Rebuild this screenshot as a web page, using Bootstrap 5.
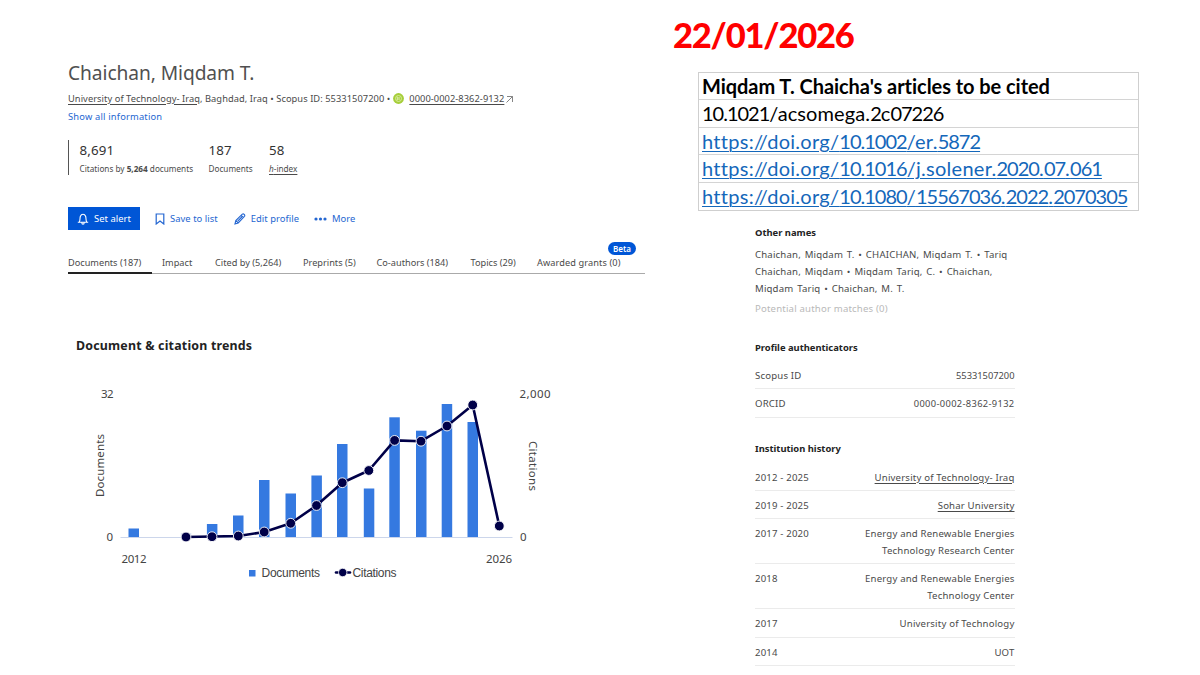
<!DOCTYPE html>
<html lang="en">
<head>
<meta charset="utf-8">
<meta name="viewport" content="width=device-width, initial-scale=1">
<title>Chaichan, Miqdam T.</title>
<link href="https://cdn.jsdelivr.net/npm/bootstrap@5.3.0/dist/css/bootstrap.min.css" rel="stylesheet">
<style>
  body { background:#fff; color:#4a4a4a; font-family:"Noto Sans","Open Sans",sans-serif; font-size:9.3px; line-height:17px; height:675px; overflow:hidden; }
  a { color:inherit; text-underline-offset:2px; }
  .t { white-space:nowrap; }
  .profile { width:577px; margin-left:68px; padding-top:60px; }
  .side { margin-left:27px; width:480px; padding-top:15px; }
  .author { font-size:19.2px; line-height:24px; font-weight:400; color:#505050; margin:0 0 5px; letter-spacing:-.08px; padding-top:.5px; }
  .meta { letter-spacing:.055px; }
  .show-all { color:#2466d1; margin-top:1px; letter-spacing:.2px; }
  .stats { border-left:1.5px solid #555; height:35px; margin-top:15.5px; padding-left:10.5px; }
  .stats .num { font-size:13.3px; line-height:20px; color:#333; letter-spacing:.15px; }
  .stats .lbl { font-size:8.2px; line-height:17px; }
  .st1 { width:129px; } .st2 { width:60.5px; }
  .actions { margin-top:32px; height:23px; color:#2466d1; font-size:9.4px; letter-spacing:.05px; }
  .alert-btn { width:72px; height:23px; background:#0056d6; color:#fff; border-radius:0; padding:0 0 0 9px; font-size:9.4px; line-height:17px; text-align:left; letter-spacing:.05px; }
  .alert-btn:hover { background:#0056d6; color:#fff; }
  .tabs { margin-top:22.5px; height:21px; border-bottom:1px solid #aaa; line-height:20px; font-size:9.2px; flex-wrap:nowrap; }
  .tabs .nav-link { padding:0; color:#4a4a4a; height:21px; white-space:nowrap; }
  .tabs .active { width:84px; border-bottom:2px solid #222; }
  .beta { right:9px; top:-11px; width:28px; height:13px; line-height:13px; padding:0; font-size:8px; font-weight:600; background:#0056d6; }
  .trend { font-size:12.4px; letter-spacing:.2px; line-height:20px; color:#222; font-weight:700; margin:62px 0 0 8px; }
  .chart { display:block; margin-top:14.5px; }
  .chart text { fill:#444; font-size:11.5px; }
  .chart .lg { font-family:"Liberation Sans",sans-serif; font-size:12px; }
  .date { font-family:Lato,sans-serif; font-weight:900; font-size:34.5px; line-height:40px; color:#f00; letter-spacing:-1.2px; padding-left:1px; }
  .dois { margin:17px 0 0 26px; width:441px; border:1px solid #cfcfcf; font-family:Lato,sans-serif; font-size:20px; color:#000; letter-spacing:.1px; }
  .dois > div { height:27.4px; line-height:27px; border-bottom:1px solid #d4d4d4; padding-left:3px; white-space:nowrap; }
  .dois > div:last-child { border-bottom:0; }
  .dois .fw-bold { letter-spacing:-.05px; }
  .dois .dg { letter-spacing:-1px; }
  .dois a { color:#1467ba; text-decoration-thickness:1px; letter-spacing:.28px; }
  .info { width:259.5px; margin-left:83px; margin-top:13px; line-height:16.8px; font-size:9.6px; letter-spacing:.18px; }
  .info h2 { font-size:9.4px; line-height:17px; font-weight:700; color:#222; margin:0; letter-spacing:0; }
  .info .names { margin-top:6.5px; word-spacing:1.1px; }
  .info .fact { padding:7px 0 3.5px; border-bottom:1px solid #ebebeb; }
  .info .idno { font-size:9.3px; letter-spacing:0; }
</style>
</head>
<body class="d-flex">
<main class="profile flex-shrink-0">
  <h1 class="author t">Chaichan, Miqdam T.</h1>
  <div class="d-flex align-items-center t">
    <span class="meta"><a href="#">University of Technology- Iraq</a>, Baghdad, Iraq • Scopus ID: 55331507200 •</span>
    <svg style="margin-left:3px;margin-right:5px" width="11" height="11" viewBox="0 0 11 11"><circle cx="5.5" cy="5.5" r="5.4" fill="#a6ce39"/><circle cx="5.5" cy="5.5" r="3" fill="none" stroke="#d5ea98"/><path d="M4.3 3.8v3.4M6 4v3" stroke="#eef8cf" stroke-width=".8"/></svg>
    <a href="#" style="letter-spacing:.05px">0000-0002-8362-9132</a>
    <svg style="margin-left:1px" width="9" height="9" viewBox="0 0 9 9" fill="none" stroke="#777" stroke-width=".9"><path d="M2 2.500h5.500V8M7.500 2.500L1.500 8.500"/></svg>
  </div>
  <div class="show-all t">Show all information</div>
  <div class="stats d-flex t">
    <div class="st1"><div class="num">8,691</div><div class="lbl">Citations by <b>5,264</b> documents</div></div>
    <div class="st2"><div class="num">187</div><div class="lbl">Documents</div></div>
    <div><div class="num">58</div><div class="lbl"><a href="#"><i>h</i>-index</a></div></div>
  </div>
  <div class="actions d-flex align-items-center t">
    <button class="btn alert-btn d-flex align-items-center border-0"><svg style="margin-right:5px" width="12" height="12" viewBox="0 0 12 12" fill="none" stroke="#fff" stroke-width="1.1"><path d="M.8 9.300h10.400M2.200 9.200C3.400 7.500 2.700 5 3.400 3.200Q4.200 1.200 6 1.200T8.600 3.200C9.300 5 8.600 7.500 9.800 9.200M4.800 9.500q0 1.700 1.200 1.700t1.200-1.700"/></svg>Set alert</button>
    <svg style="margin-left:15px;margin-right:5px" width="10" height="12" viewBox="0 0 10 12" fill="none" stroke="#2466d1" stroke-width="1.2"><path d="M1.200 1h7.600v10L5 8 1.200 11z"/></svg><span>Save to list</span>
    <svg style="margin-left:16px;margin-right:5px" width="12" height="12" viewBox="0 0 12 12" fill="none" stroke="#2466d1" stroke-width="1.1"><path d="M1 11l.8-3.400L8.300 1.100q1-.6 1.900.3t.4 1.900L4.200 10 1 11zM7.200 2.300l2.400 2.400M1.800 7.600l2.500 2.300M3.700 8.100l4.600-4.600"/></svg><span>Edit profile</span>
    <svg style="margin-left:15px;margin-right:5px" width="13" height="4" viewBox="0 0 13 4" fill="#2466d1"><circle cx="2" cy="2" r="1.600"/><circle cx="6.500" cy="2" r="1.600"/><circle cx="11" cy="2" r="1.600"/></svg><span>More</span>
  </div>
  <nav class="nav tabs position-relative">
    <a class="nav-link active" href="#">Documents (187)</a>
    <a class="nav-link" style="margin-left:10px;width:53px" href="#">Impact</a>
    <a class="nav-link" style="width:88px" href="#">Cited by (5,264)</a>
    <a class="nav-link" style="width:73.5px" href="#">Preprints (5)</a>
    <a class="nav-link" style="width:94px" href="#">Co-authors (184)</a>
    <a class="nav-link" style="width:66.5px" href="#">Topics (29)</a>
    <a class="nav-link" style="letter-spacing:.1px" href="#">Awarded grants (0)</a>
    <span class="badge rounded-pill beta position-absolute">Beta</span>
  </nav>
  <h2 class="trend t">Document &amp; citation trends</h2>
  <svg class="chart" width="577" height="220" viewBox="68 370 577 220">
    <path d="M120.500 537.500H512.500" stroke="#ccd6eb"/>
    <g fill="#3579e0">
      <rect x="128.500" y="528.500" width="10.500" height="8.500"/>
      <rect x="180.800" y="533" width="10.500" height="4" fill="#dbe6f8"/>
      <rect x="206.900" y="524" width="10.500" height="13"/>
      <rect x="233" y="515.500" width="10.500" height="21.500"/>
      <rect x="259" y="480" width="10.500" height="57"/>
      <rect x="285.500" y="493.500" width="10.500" height="43.500"/>
      <rect x="311.400" y="475.500" width="10.500" height="61.500"/>
      <rect x="337" y="444" width="10.500" height="93"/>
      <rect x="363.800" y="488.500" width="10.500" height="48.500"/>
      <rect x="389.300" y="417.300" width="10.500" height="119.700"/>
      <rect x="416" y="430.700" width="10.500" height="106.300"/>
      <rect x="441.700" y="404" width="10.500" height="133"/>
      <rect x="467.500" y="422" width="10.500" height="115"/>
    </g>
    <path d="M186 537L212 536.500 238.300 536 264.200 532 290.700 523.300 316.500 505.500 342.300 482.700 368.800 470.500 394.600 440.400 421 441.200 447 426 472.700 405 499.300 526" fill="none" stroke="#000048" stroke-width="2.600" stroke-linejoin="round"/>
    <g fill="#000048" stroke="#fff" stroke-width=".9">
      <circle cx="186" cy="537" r="4.900"/><circle cx="212" cy="536.700" r="4.900"/><circle cx="238.300" cy="536" r="4.900"/><circle cx="264.200" cy="532" r="4.900"/><circle cx="290.700" cy="523.300" r="4.900"/><circle cx="316.500" cy="505.500" r="4.900"/><circle cx="342.300" cy="482.700" r="4.900"/><circle cx="368.800" cy="470.500" r="4.900"/><circle cx="394.600" cy="440.400" r="4.900"/><circle cx="421" cy="441.200" r="4.900"/><circle cx="447" cy="426" r="4.900"/><circle cx="472.700" cy="405" r="4.900"/><circle cx="499.300" cy="526" r="4.900"/>
    </g>
    <text x="101" y="397.500" textLength="12.500">32</text>
    <text x="106.500" y="540.500" textLength="6.500">0</text>
    <text x="519.500" y="397.500" textLength="31">2,000</text>
    <text x="520" y="540.500" textLength="6.500">0</text>
    <text x="121.500" y="563" textLength="25">2012</text>
    <text x="486" y="563" textLength="26">2026</text>
    <text transform="translate(104 497) rotate(-90)" textLength="63">Documents</text>
    <text transform="translate(528.500 441) rotate(90)" textLength="50">Citations</text>
    <rect x="249" y="570" width="6.500" height="6.500" fill="#3579e0"/>
    <text class="lg" x="261.500" y="577" textLength="58.500">Documents</text>
    <path d="M336 572.500H350" stroke="#000048" stroke-width="2.600" stroke-linecap="round"/>
    <circle cx="342.700" cy="572.500" r="4.200" fill="#000048" stroke="#fff" stroke-width=".8"/>
    <text class="lg" x="352.500" y="577" textLength="44">Citations</text>
  </svg>
</main>
<aside class="side flex-shrink-0">
  <div class="date t">22/01/2026</div>
  <div class="dois">
    <div class="fw-bold">Miqdam T. Chaicha's articles to be cited</div>
    <div><span class="dg">10.1021</span>/acsomega.<span class="dg">2</span>c<span class="dg">07226</span></div>
    <div><a href="#">https://doi.org/<span class="dg">10.1002</span>/er.<span class="dg">5872</span></a></div>
    <div><a href="#">https://doi.org/<span class="dg">10.1016</span>/j.solener.<span class="dg">2020</span>.<span class="dg">07</span>.<span class="dg">061</span></a></div>
    <div><a href="#">https://doi.org/<span class="dg">10.1080</span>/<span class="dg">15567036</span>.<span class="dg">2022</span>.<span class="dg">2070305</span></a></div>
  </div>
  <div class="info">
    <h2>Other names</h2>
    <div class="names t">Chaichan, Miqdam T. • CHAICHAN, Miqdam T. • Tariq<br>Chaichan, Miqdam • Miqdam Tariq, C. • Chaichan,<br>Miqdam Tariq • Chaichan, M. T.</div>
    <div class="t" style="margin-top:3px;color:#b9b9b9">Potential author matches (0)</div>
    <h2 style="margin-top:21.2px">Profile authenticators</h2>
    <div style="margin-top:5.2px">
      <div class="fact d-flex justify-content-between"><span>Scopus ID</span><span class="idno">55331507200</span></div>
      <div class="fact d-flex justify-content-between"><span>ORCID</span><span class="idno" style="letter-spacing:.35px">0000-0002-8362-9132</span></div>
    </div>
    <h2 style="margin-top:22.6px">Institution history</h2>
    <div style="margin-top:5.4px">
      <div class="fact d-flex justify-content-between"><span>2012 - 2025</span><a href="#">University of Technology- Iraq</a></div>
      <div class="fact d-flex justify-content-between"><span>2019 - 2025</span><a href="#">Sohar University</a></div>
      <div class="fact d-flex justify-content-between"><span>2017 - 2020</span><span class="text-end">Energy and Renewable Energies<br>Technology Research Center</span></div>
      <div class="fact d-flex justify-content-between"><span>2018</span><span class="text-end">Energy and Renewable Energies<br>Technology Center</span></div>
      <div class="fact d-flex justify-content-between"><span>2017</span><span>University of Technology</span></div>
      <div class="fact d-flex justify-content-between"><span>2014</span><span>UOT</span></div>
    </div>
  </div>
</aside>
<script src="https://cdn.jsdelivr.net/npm/bootstrap@5.3.0/dist/js/bootstrap.bundle.min.js"></script>
</body>
</html>
